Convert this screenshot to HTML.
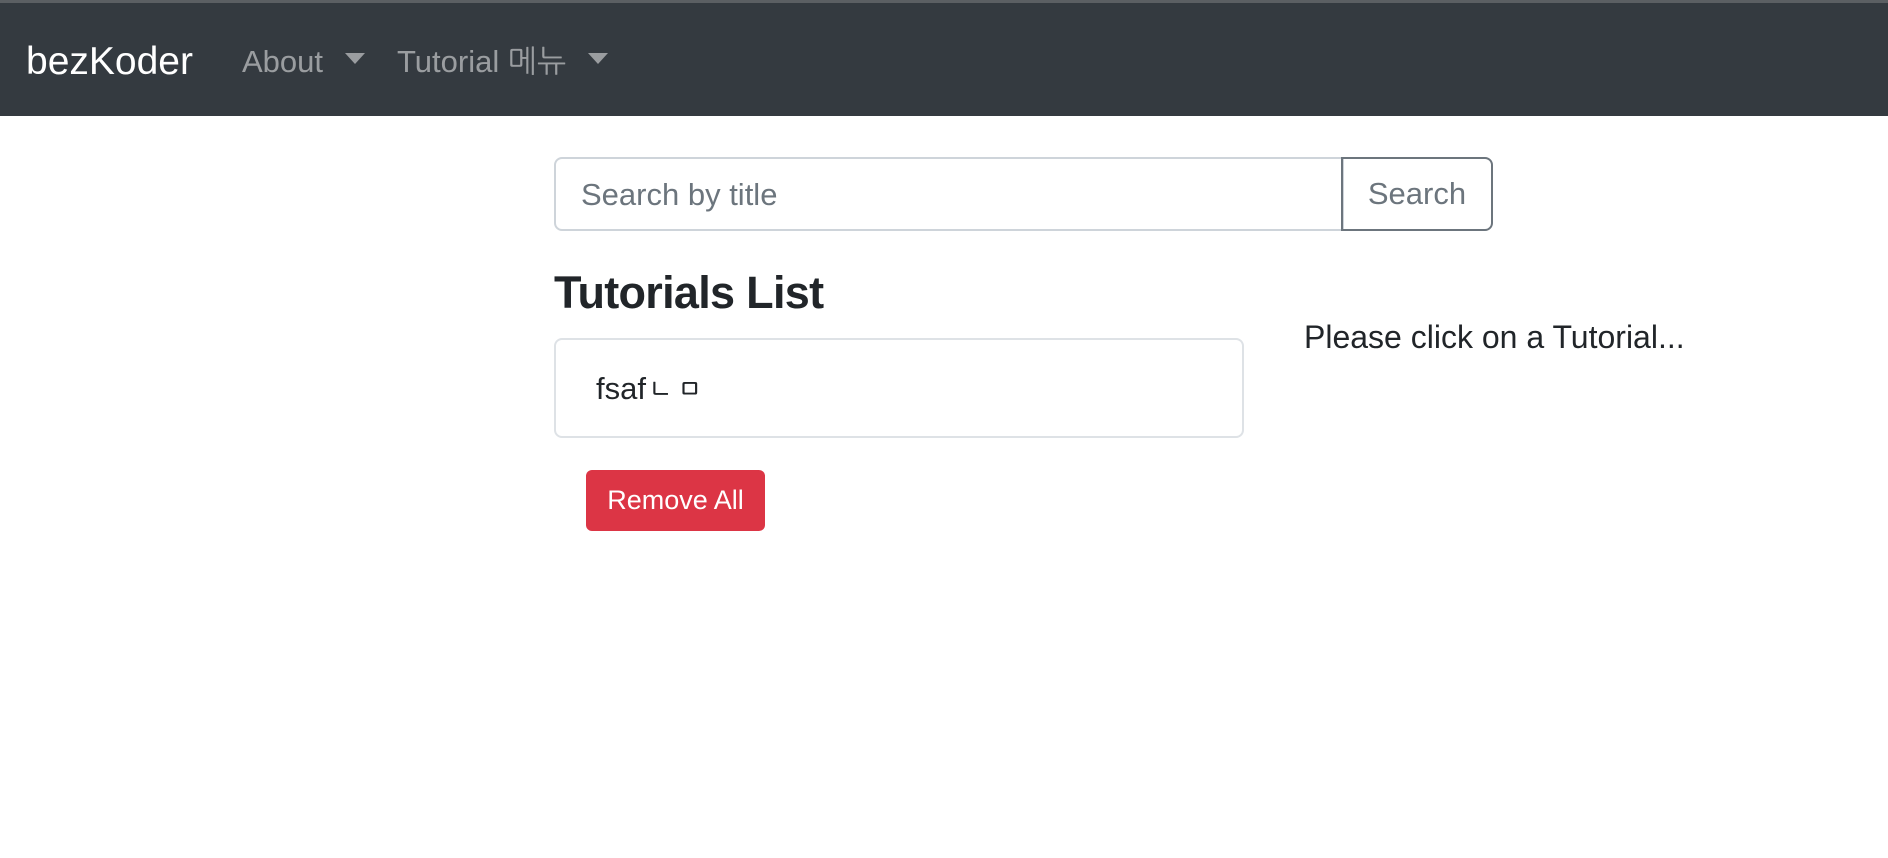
<!DOCTYPE html>
<html><head><meta charset="utf-8"><style>
*{box-sizing:border-box;margin:0;padding:0}
body{width:1888px;height:858px;background:#fff;font-family:"Liberation Sans","NanumGothic","Noto Sans CJK KR",sans-serif;color:#212529;position:relative;overflow:hidden}
.nav{position:absolute;left:0;top:0;width:1888px;height:116px;background:#343a40;border-top:3px solid #5b5f63}
.brand{position:absolute;left:26px;top:36px;font-size:39px;color:#fff;line-height:46px}
.link{position:absolute;top:40px;font-size:31px;color:rgba(255,255,255,.5);line-height:38px;white-space:nowrap}
.caret{display:inline-block;width:0;height:0;border-left:10px solid transparent;border-right:10px solid transparent;border-top:11px solid rgba(255,255,255,.5);vertical-align:middle;margin-left:22px;position:relative;top:-5px}
.input{position:absolute;left:554px;top:157px;width:790px;height:74px;border:2px solid #ced4da;border-radius:8px 0 0 8px;font-size:31px;color:#6c757d;padding:17px 25px;line-height:38px}
.btn{position:absolute;left:1341px;top:157px;width:152px;height:74px;border:2px solid #6c757d;border-radius:0 8px 8px 0;font-size:31px;color:#6c757d;text-align:center;line-height:70px}
h4{position:absolute;left:554px;top:265px;font-size:45px;font-weight:bold;line-height:56px;letter-spacing:-0.7px}
.list{position:absolute;left:554px;top:338px;width:690px;height:100px;border:2px solid #dee2e6;border-radius:8px;font-size:31px;padding:30px 40px;line-height:38px}
.rm{position:absolute;left:586px;top:470px;width:179px;height:61px;background:#dc3545;border-radius:6px;color:#fff;font-size:27px;text-align:center;line-height:61px}
.msg{position:absolute;left:1304px;top:318px;font-size:32px;line-height:38px;white-space:nowrap}
</style></head><body>
<div class="nav">
<div class="brand">bezKoder</div>
<div class="link" style="left:242px">About<span class="caret"></span></div>
<div class="link" style="left:397px">Tutorial 메뉴<span class="caret"></span></div>
</div>
<div class="input">Search by title</div>
<div class="btn">Search</div>
<h4>Tutorials List</h4>
<div class="list">fsafㄴㅁ</div>
<div class="rm">Remove All</div>
<div class="msg">Please click on a Tutorial...</div>
</body></html>
